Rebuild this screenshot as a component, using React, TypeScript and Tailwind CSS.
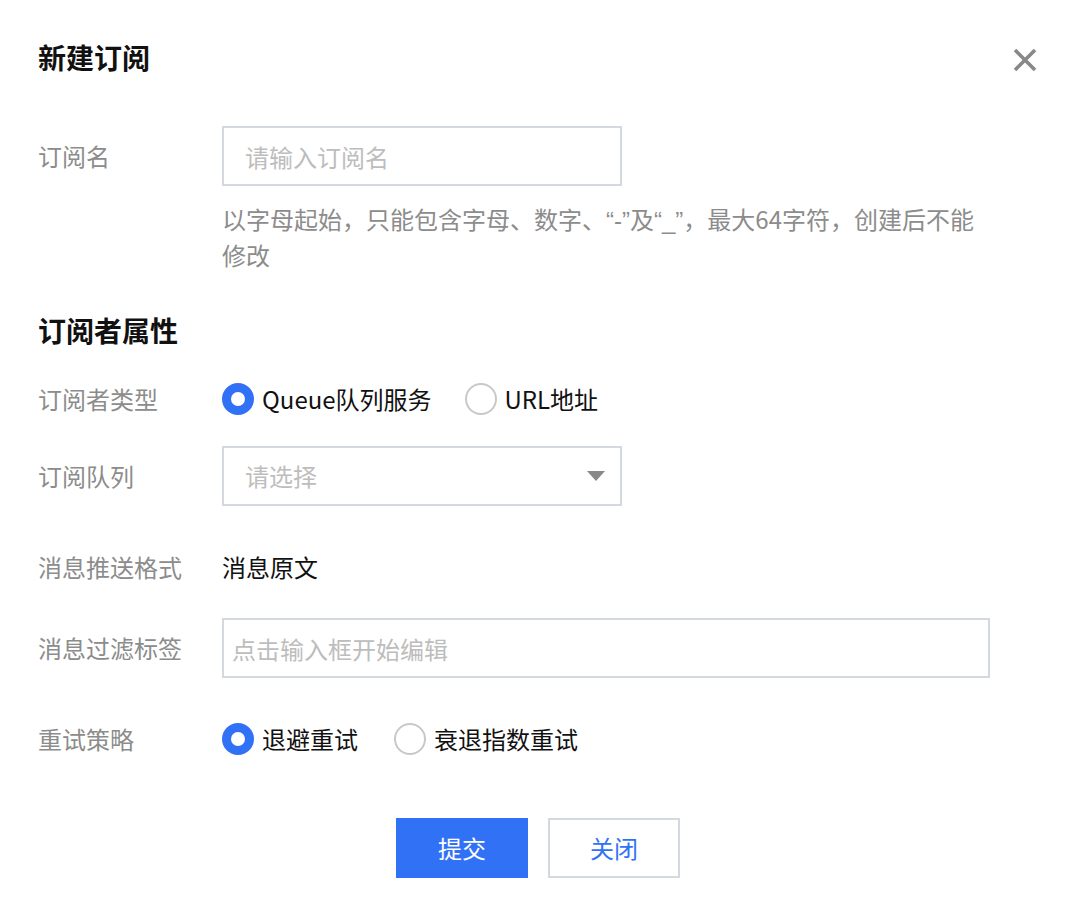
import React from "react";

const FONT = { fontFamily: '"Noto Sans CJK SC", "Noto Sans", sans-serif' };
const LATIN = { fontFamily: '"Liberation Sans", "Noto Sans CJK SC", sans-serif' };

function Radio({ checked, label }: { checked: boolean; label: string }) {
  return (
    <label className="flex items-center gap-[8px] cursor-pointer">
      {checked ? (
        <span className="w-[32px] h-[32px] rounded-full border-[9px] border-[#3171f6] bg-white box-border" />
      ) : (
        <span className="w-[32px] h-[32px] rounded-full border-2 border-[#c8c8c8] bg-white box-border" />
      )}
      <span className="text-[24px] leading-[32px] text-[#111]">{label}</span>
    </label>
  );
}

function Label({ children }: { children: React.ReactNode }) {
  return (
    <div className="w-[184px] shrink-0 text-[24px] leading-[32px] text-[#8c8c8c]">{children}</div>
  );
}

export default function App() {
  return (
    <div className="w-[1074px] h-[914px] bg-white relative overflow-hidden" style={FONT}>
      <div className="pl-[38px] pr-[37px]">
        {/* header */}
        <div className="flex items-center justify-between pt-[37px] h-[77px]">
          <h1 className="text-[28px] leading-[40px] font-bold text-[#111]">新建订阅</h1>
          <button className="w-[24px] h-[24px] mt-[5px] flex items-center justify-center" aria-label="close">
            <svg width="24" height="24" viewBox="0 0 24 24">
              <path d="M2 2 L22 22 M22 2 L2 22" stroke="#888" strokeWidth="3.6" strokeLinecap="butt" />
            </svg>
          </button>
        </div>

        {/* 订阅名 */}
        <div className="flex items-center h-[60px] mt-[49px]">
          <Label>订阅名</Label>
          <input
            className="w-[400px] h-[60px] border-2 border-[#d4d8e0] pl-[21px] text-[24px] outline-none placeholder:text-[#bdbdbd] text-[#111]"
            style={FONT}
            placeholder="请输入订阅名"
          />
        </div>
        <div className="ml-[184px] mt-[15px] text-[24px] leading-[36px] text-[#8c8c8c]">
          <div className="whitespace-nowrap h-[36px] overflow-visible">
            以字母起始，只能包含字母、数字、<span className="leading-[20px]" style={LATIN}>“-”</span>及<span className="leading-[20px]" style={LATIN}>“_”</span>，最大64字符，创建后不能
          </div>
          <div className="h-[36px]">修改</div>
        </div>

        {/* section */}
        <h2 className="mt-[37px] text-[28px] leading-[40px] font-bold text-[#111]">订阅者属性</h2>

        <div className="flex items-center h-[60px] mt-[19px]">
          <Label>订阅者类型</Label>
          <div className="flex items-center gap-[33px]">
            <Radio checked label="Queue队列服务" />
            <Radio checked={false} label="URL地址" />
          </div>
        </div>

        <div className="flex items-center h-[60px] mt-[17px]">
          <Label>订阅队列</Label>
          <div className="w-[400px] h-[60px] border-2 border-[#d4d8e0] pl-[21px] pr-[15px] flex items-center justify-between">
            <span className="text-[24px] text-[#bdbdbd]">请选择</span>
            <svg width="18" height="10" viewBox="0 0 18 10">
              <path d="M0 0 L18 0 L9 10 Z" fill="#888" />
            </svg>
          </div>
        </div>

        <div className="flex items-center h-[60px] mt-[31px]">
          <Label>消息推送格式</Label>
          <span className="text-[24px] leading-[32px] text-[#111]">消息原文</span>
        </div>

        <div className="flex items-center h-[60px] mt-[21px]">
          <Label>消息过滤标签</Label>
          <input
            className="w-[768px] h-[60px] border-2 border-[#d4d8e0] pl-[8px] text-[24px] outline-none placeholder:text-[#bdbdbd] text-[#111]"
            style={FONT}
            placeholder="点击输入框开始编辑"
          />
        </div>

        <div className="flex items-center h-[60px] mt-[31px]">
          <Label>重试策略</Label>
          <div className="flex items-center gap-[36px]">
            <Radio checked label="退避重试" />
            <Radio checked={false} label="衰退指数重试" />
          </div>
        </div>
      </div>

      {/* footer */}
      <div className="flex justify-center gap-[20px] mt-[49px] pl-[2px]">
        <button className="w-[132px] h-[60px] bg-[#3171f6] text-white text-[24px]" style={FONT}>提交</button>
        <button className="w-[132px] h-[60px] border-2 border-[#d4d8e0] bg-white text-[#3171f6] text-[24px]" style={FONT}>关闭</button>
      </div>
    </div>
  );
}
